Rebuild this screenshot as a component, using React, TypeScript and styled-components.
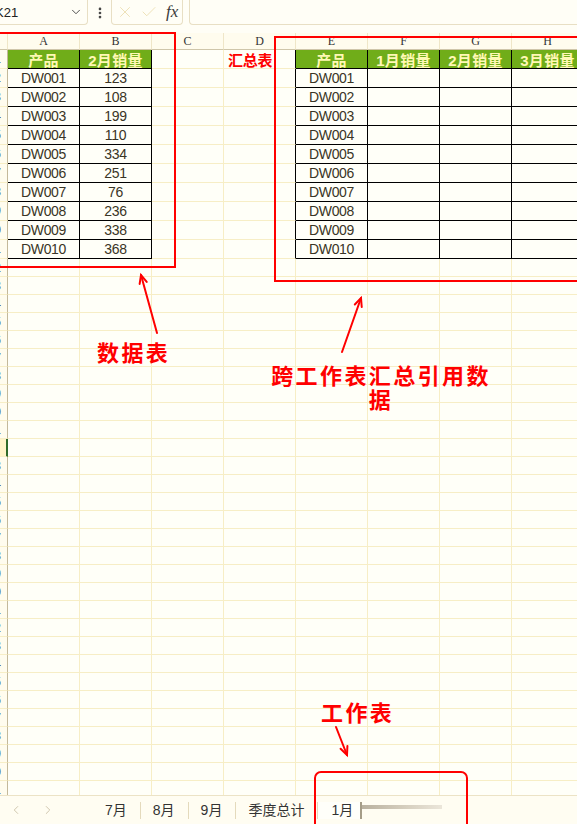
import React from "react";
import styled, { createGlobalStyle } from "styled-components";
import { Check, ChevronDown, ChevronLeft, ChevronRight, EllipsisVertical, X } from "lucide-react";

const GRID = "#f7eec6";
const PAPER = "#fffef6";
const GREEN = "#70ad19";
const RED = "#ff0000";

const GlobalStyle = createGlobalStyle`
    body {
        margin: 0;
        background: ${PAPER};
        font-family: "Liberation Sans", "Noto Sans CJK SC", sans-serif;
        color: #333;
    }
`;

const Screen = styled.div`
    position: relative;
    width: 577px;
    height: 824px;
    overflow: hidden;
    display: flex;
    flex-direction: column;
    background: ${PAPER};
`;

const FormulaBar = styled.div`
    height: 25px;
    display: flex;
    align-items: stretch;
    flex-shrink: 0;
`;

const NameBox = styled.div`
    width: 88px;
    box-sizing: border-box;
    display: flex;
    align-items: center;
    justify-content: space-between;
    padding-right: 4px;
    border-right: 1px solid #e8dfc4;
    border-bottom: 1px solid #e8dfc4;
    border-bottom-right-radius: 4px;
    font-size: 13px;
    color: #222;
    text-indent: -5px;
    svg {
        color: #444;
    }
`;

const MenuDots = styled.div`
    width: 23px;
    display: flex;
    align-items: center;
    justify-content: center;
    color: #444;
`;

const FxBox = styled.div`
    width: 72px;
    box-sizing: border-box;
    display: flex;
    align-items: center;
    gap: 6px;
    padding-left: 4px;
    border: 1px solid #e8dfc4;
    border-top: none;
    border-radius: 0 0 4px 4px;
    svg {
        color: #eadcab;
    }
`;

const Fx = styled.span`
    font-family: "Liberation Serif", serif;
    font-style: italic;
    font-size: 17px;
    color: #3a3a3a;
    margin-left: 2px;
`;

const FormulaInput = styled.div`
    flex: 1;
    margin-left: 6px;
    border-left: 1px solid #e8dfc4;
    border-bottom: 1px solid #e8dfc4;
    border-bottom-left-radius: 4px;
`;

const Sheet = styled.div`
    flex: 1;
    margin-top: 8px;
    overflow: hidden;
    display: grid;
    grid-template-columns: 8px repeat(8, 72px);
    align-content: start;
`;

const ColHead = styled.div`
    height: 17px;
    box-sizing: border-box;
    border-right: 1px solid #efe6c8;
    border-bottom: 1px solid #cfc6aa;
    background: #fffcee;
    font-family: "Liberation Serif", serif;
    font-size: 12px;
    line-height: 16px;
    text-align: center;
    color: #333;
`;

const RowHead = styled.div<{ $h: number; $active?: boolean }>`
    height: ${(p) => p.$h}px;
    box-sizing: border-box;
    display: flex;
    align-items: center;
    justify-content: flex-end;
    overflow: hidden;
    padding-right: 6px;
    border-bottom: 1px solid ${GRID};
    border-right: ${(p) => (p.$active ? "2px solid #2f6b2a" : "1px solid #c4b99a")};
    background: ${(p) => (p.$active ? "#fff4c8" : "#fffcee")};
    font-size: 12px;
    white-space: nowrap;
    color: #444;
`;

type Tone = "plain" | "head" | "body";

const Cell = styled.div<{ $h: number; $tone: Tone; $edge?: boolean }>`
    height: ${(p) => p.$h}px;
    box-sizing: border-box;
    display: flex;
    align-items: center;
    justify-content: center;
    white-space: nowrap;
    border-right: 1px solid ${(p) => (p.$tone !== "plain" || p.$edge ? "#000" : GRID)};
    border-bottom: 1px solid ${(p) => (p.$tone === "plain" ? GRID : "#000")};
    background: ${(p) => (p.$tone === "head" ? GREEN : "#fffff8")};
    color: ${(p) => (p.$tone === "head" ? "#fff8b4" : "#3a3526")};
    font-size: ${(p) => (p.$tone === "head" ? "15px" : "14px")};
    font-weight: ${(p) => (p.$tone === "head" ? 700 : 400)};
    letter-spacing: ${(p) => (p.$tone === "head" ? "0.3px" : "-0.3px")};
`;

const SheetTitle = styled.span`
    align-self: center;
    margin-right: auto;
    padding-left: 4px;
    color: ${RED};
    font-size: 15px;
    font-weight: 700;
`;

const TabBar = styled.div`
    height: 29px;
    flex-shrink: 0;
    box-sizing: border-box;
    display: flex;
    align-items: center;
    border-top: 1px solid #ece3c6;
    background: #fffdf2;
`;

const ScrollBtn = styled.div`
    width: 32px;
    display: flex;
    justify-content: center;
    color: #c9bfa6;
`;

const TabList = styled.div`
    display: flex;
    align-items: center;
    margin-left: 29px;
`;

const Tab = styled.div<{ $active?: boolean }>`
    height: 17px;
    line-height: 17px;
    font-size: 14px;
    color: #333;
    padding: ${(p) => (p.$active ? "0 7px 0 13px" : "0 13px 0 12px")};
    border-right: ${(p) => (p.$active ? "2px solid #a59d88" : "1px solid #e4dabc")};
    background: ${(p) => (p.$active ? "#fffffa" : "transparent")};
`;

const Smudge = styled.div`
    width: 80px;
    height: 4px;
    margin-top: -7px;
    background: linear-gradient(to right, #b9b19f, #d6cfbf 55%, #ebe6da);
    filter: blur(0.6px);
`;

const RedFrame = styled.div<{ $x: number; $y: number; $w: number; $h: number; $round?: boolean }>`
    position: absolute;
    left: ${(p) => p.$x}px;
    top: ${(p) => p.$y}px;
    width: ${(p) => p.$w}px;
    height: ${(p) => p.$h}px;
    box-sizing: border-box;
    border: 2.5px solid ${RED};
    border-radius: ${(p) => (p.$round ? "7px" : "0")};
    pointer-events: none;
`;

const Note = styled.div<{ $x: number; $y: number; $w?: number }>`
    position: absolute;
    left: ${(p) => p.$x}px;
    top: ${(p) => p.$y}px;
    width: ${(p) => (p.$w ? `${p.$w}px` : "auto")};
    text-align: center;
    font-family: "Noto Sans CJK SC", sans-serif;
    font-size: 22px;
    font-weight: 700;
    line-height: 24px;
    letter-spacing: 2.4px;
    color: ${RED};
`;

const Arrows = styled.svg`
    position: absolute;
    left: 0;
    top: 0;
    pointer-events: none;
`;

const COLS = ["A", "B", "C", "D", "E", "F", "G", "H"];
const FEB = [123, 108, 199, 110, 334, 251, 76, 236, 338, 368];
const CODES = FEB.map((_, i) => `DW${String(i + 1).padStart(3, "0")}`);
const ROWS = 42;
const ACTIVE_ROW = 21;

const leftTable = (r: number, c: number) => {
    if (r === 0) return ["产品", "2月销量"][c];
    return c === 0 ? CODES[r - 1] : String(FEB[r - 1]);
};

const rightTable = (r: number, c: number) => {
    if (r === 0) return ["产品", "1月销量", "2月销量", "3月销量"][c];
    return c === 0 ? CODES[r - 1] : "";
};

const renderRow = (r: number) => {
    const inTable = r <= 10;
    const h = inTable ? 19 : 18;
    const tone: Tone = r === 0 ? "head" : "body";
    return (
        <React.Fragment key={r}>
            <RowHead $h={h} $active={r === ACTIVE_ROW}>{r + 1}</RowHead>
            {COLS.map((_, c) => {
                if (inTable && c < 2) {
                    return <Cell key={c} $h={h} $tone={tone}>{leftTable(r, c)}</Cell>;
                }
                if (inTable && c >= 4) {
                    return <Cell key={c} $h={h} $tone={tone}>{rightTable(r, c - 4)}</Cell>;
                }
                return (
                    <Cell key={c} $h={h} $tone="plain" $edge={inTable && c === 3}>
                        {r === 0 && c === 3 ? <SheetTitle>汇总表</SheetTitle> : null}
                    </Cell>
                );
            })}
        </React.Fragment>
    );
};

// arrow from tail to tip, open chevron head at the tip
const arrow = (tx: number, ty: number, hx: number, hy: number) => {
    const dx = tx - hx;
    const dy = ty - hy;
    const len = Math.hypot(dx, dy);
    const ux = dx / len;
    const uy = dy / len;
    const a = 0.42;
    const l = 9;
    const wing = (s: number) => {
        const cx = ux * Math.cos(s * a) - uy * Math.sin(s * a);
        const cy = ux * Math.sin(s * a) + uy * Math.cos(s * a);
        return `${hx + cx * l},${hy + cy * l}`;
    };
    return (
        <g key={`${hx}-${hy}`}>
            <line x1={tx} y1={ty} x2={hx} y2={hy} />
            <polyline points={`${wing(1)} ${hx},${hy} ${wing(-1)}`} fill="none" />
        </g>
    );
};

const App = () => {
    return (
        <Screen>
            <GlobalStyle />
            <FormulaBar>
                <NameBox>
                    K21
                    <ChevronDown size={14} strokeWidth={1.6} />
                </NameBox>
                <MenuDots>
                    <EllipsisVertical size={14} strokeWidth={2.6} />
                </MenuDots>
                <FxBox>
                    <X size={18} strokeWidth={1.1} />
                    <Check size={18} strokeWidth={1.1} />
                    <Fx>fx</Fx>
                </FxBox>
                <FormulaInput />
            </FormulaBar>

            <Sheet>
                <ColHead />
                {COLS.map((c) => (
                    <ColHead key={c}>{c}</ColHead>
                ))}
                {Array.from({ length: ROWS }, (_, r) => renderRow(r))}
            </Sheet>

            <TabBar>
                <ScrollBtn><ChevronLeft size={14} strokeWidth={1.5} /></ScrollBtn>
                <ScrollBtn><ChevronRight size={14} strokeWidth={1.5} /></ScrollBtn>
                <TabList>
                    <Tab>7月</Tab>
                    <Tab>8月</Tab>
                    <Tab>9月</Tab>
                    <Tab>季度总计</Tab>
                    <Tab $active>1月</Tab>
                    <Smudge />
                </TabList>
            </TabBar>

            <RedFrame $x={-4} $y={32} $w={180} $h={236} />
            <RedFrame $x={274} $y={36} $w={310} $h={246} />
            <RedFrame $x={314} $y={771} $w={154} $h={64} $round />

            <Arrows width={577} height={824} stroke={RED} strokeWidth={2} strokeLinecap="round">
                {arrow(157, 333, 141, 275)}
                {arrow(342, 352, 361, 298)}
                {arrow(336, 727, 347, 755)}
            </Arrows>

            <Note $x={97} $y={339}>数据表</Note>
            <Note $x={267} $y={362} $w={228}>跨工作表汇总引用数据</Note>
            <Note $x={321} $y={699}>工作表</Note>
        </Screen>
    );
};

export default App;
